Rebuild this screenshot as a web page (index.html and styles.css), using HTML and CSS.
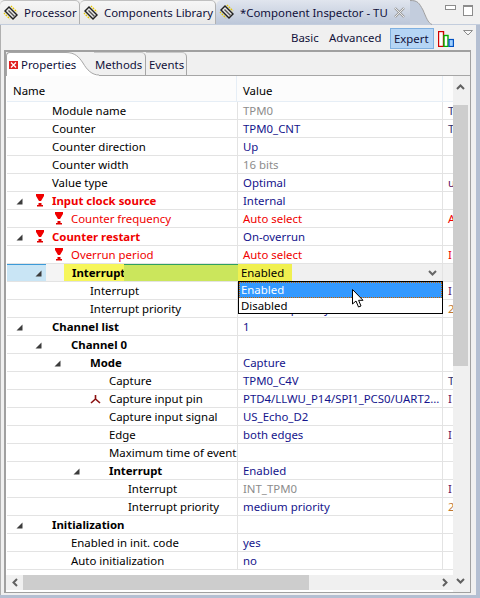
FILE: index.html
```html
<!DOCTYPE html>
<html lang="en">
<head>
  <meta charset="UTF-8" />
  <title>Component Inspector</title>
  <link rel="stylesheet" href="styles.css">
</head>
<body>

  <svg class="defs" width="0" height="0">
    <symbol id="chip" viewBox="0 0 16 16">
      <path d="M1 6 L6 1 L15 10 L10 15 Z" fill="#222"/>
      <path d="M3 6 L6 3 L13 10 L10 13 Z" fill="#e8e8e8"/>
      <path d="M5 6 L6 5 L12 11 L11 12 Z" fill="#555"/>
      <path d="M1 8 L3 10 M3 10 L5 12 M5 12 L7 14 M8 1 L10 3 M10 3 L12 5 M12 5 L14 7" stroke="#e8c800" stroke-width="1.4" stroke-dasharray="1.4 1"/>
    </symbol>
    <symbol id="twist" viewBox="0 0 7 7">
      <path d="M6.5 .5 V6.5 H.5 Z" fill="#3c3c3c"/>
    </symbol>
    <symbol id="warn" viewBox="0 0 10 13">
      <path d="M1 0 H9 V2 L6 7 H4 L1 2 Z" fill="#f00000"/>
      <path d="M3.5 9 H6.5 V11 H8 V12.5 H2 V11 H3.5 Z" fill="#e00000"/>
    </symbol>
  </svg>

  <div class="window">
    <div class="top-tabs">
      <div class="top-tab tab-processor"><svg class="chip"><use href="#chip"/></svg>Processor</div>
      <div class="top-tab tab-library"><svg class="chip"><use href="#chip"/></svg>Components Library</div>
      <div class="top-tab active"><svg class="chip"><use href="#chip"/></svg>*Component Inspector - TU
        <svg class="close" width="11" height="11" viewBox="0 0 11 11"><path d="M1 1 L10 10 M10 1 L1 10" stroke="#9a9a9a" stroke-width="2.4"/><path d="M1 1 L10 10 M10 1 L1 10" stroke="#f4f4f4" stroke-width=".9"/></svg>
      </div>
      <svg class="tab-curve" width="22" height="25" viewBox="0 0 22 25"><path d="M0 0 C8 0 9 3 13 10 C16 17 18 23 22 25 H0 Z" fill="#c3cddd"/><path d="M0 .5 C8 .5 9 3 13 10 C16 17 18 23 22 24.5" fill="none" stroke="#a0a0a0"/></svg>
      <div class="window-btns">
        <span class="min-btn"></span>
        <span class="max-btn"></span>
      </div>
    </div>

    <div class="frame">
      <div class="toolbar">
        <span class="tool tool-basic">Basic</span>
        <span class="tool tool-advanced">Advanced</span>
        <span class="tool tool-expert">Expert</span>
        <svg class="chart" width="16" height="16" viewBox="0 0 16 16">
          <rect x=".5" y=".5" width="5" height="15" fill="#fff" stroke="#d00000" stroke-width="1.4"/>
          <rect x="6" y="4.5" width="4" height="11" fill="#fff" stroke="#00b000" stroke-width="1.4"/>
          <rect x="11" y="8.5" width="4.4" height="7" fill="#9fd0ff" stroke="#0050c0" stroke-width="1.2"/>
        </svg>
        <svg class="view-menu" width="10" height="6" viewBox="0 0 10 6"><path d="M.5 .5 H9.5 L5 5 Z" fill="#f8f8f8" stroke="#8c8c8c"/></svg>
      </div>

      <div class="inner">
        <div class="inner-tabs">
          <div class="inner-tab inner-active">
            <svg class="prop-icon" width="9" height="8" viewBox="0 0 9 8"><rect width="9" height="8" fill="#e02020"/><path d="M2 1.5 L7 6.5 M7 1.5 L2 6.5" stroke="#fff" stroke-width="1.3"/></svg>
            Properties
          </div>
          <svg class="inner-curve" width="33" height="24" viewBox="0 0 33 24"><path d="M0 0 C9 0 13 5 17 11 C21 18 26 23 33 23 V24 H0 Z" fill="#fff"/><path d="M0 .5 C9 .5 13 5 17 11 C21 18 26 23 33 23" fill="none" stroke="#a6a6a6"/></svg>
          <div class="inner-tab tab-methods">Methods</div>
          <div class="inner-tab tab-events">Events</div>
        </div>

        <div class="table-area">
          <div class="table">
            <div class="head">
              <div class="head-name">Name</div>
              <div class="head-value">Value</div>
              <div class="head-extra"></div>
            </div>

            <div class="rows">
              <div class="row"><div class="name"><i class="lvl0"></i><i class="twist"></i><i class="mark"></i>Module name</div><div class="value ro">TPM0</div><div class="extra">T</div></div>
              <div class="row"><div class="name"><i class="lvl0"></i><i class="twist"></i><i class="mark"></i>Counter</div><div class="value">TPM0_CNT</div><div class="extra">T</div></div>
              <div class="row"><div class="name"><i class="lvl0"></i><i class="twist"></i><i class="mark"></i>Counter direction</div><div class="value">Up</div><div class="extra"></div></div>
              <div class="row"><div class="name"><i class="lvl0"></i><i class="twist"></i><i class="mark"></i>Counter width</div><div class="value ro">16 bits</div><div class="extra"></div></div>
              <div class="row"><div class="name"><i class="lvl0"></i><i class="twist"></i><i class="mark"></i>Value type</div><div class="value">Optimal</div><div class="extra purple">u</div></div>
              <div class="row"><div class="name bad"><i class="lvl0"></i><i class="twist"><svg><use href="#twist"/></svg></i><i class="mark"><svg class="warn"><use href="#warn"/></svg></i><b>Input clock source</b></div><div class="value">Internal</div><div class="extra"></div></div>
              <div class="row"><div class="name bad"><i class="lvl1"></i><i class="twist"></i><i class="mark"><svg class="warn"><use href="#warn"/></svg></i>Counter frequency</div><div class="value bad">Auto select</div><div class="extra bad">A</div></div>
              <div class="row"><div class="name bad"><i class="lvl0"></i><i class="twist"><svg><use href="#twist"/></svg></i><i class="mark"><svg class="warn"><use href="#warn"/></svg></i><b>Counter restart</b></div><div class="value">On-overrun</div><div class="extra"></div></div>
              <div class="row"><div class="name bad"><i class="lvl1"></i><i class="twist"></i><i class="mark"><svg class="warn"><use href="#warn"/></svg></i>Overrun period</div><div class="value bad">Auto select</div><div class="extra bad">I</div></div>

              <div class="row selected">
                <div class="name">
                  <div class="sel-blue"><svg><use href="#twist"/></svg></div>
                  <div class="sel-gap"></div>
                  <div class="sel-yellow"><b>Interrupt</b></div>
                  <div class="sel-green"></div>
                </div>
                <div class="value sel-value">
                  <span class="sel-text">Enabled</span>
                  <svg class="combo-arrow" width="9" height="6" viewBox="0 0 9 6"><path d="M1 1 L4.5 4.5 L8 1" fill="none" stroke="#666" stroke-width="2"/></svg>
                </div>
                <div class="extra"></div>
              </div>

              <div class="row"><div class="name"><i class="lvl2"></i><i class="twist"></i><i class="mark"></i>Interrupt</div><div class="value"></div><div class="extra purple">I</div></div>
              <div class="row"><div class="name"><i class="lvl2"></i><i class="twist"></i><i class="mark"></i>Interrupt priority</div><div class="value">medium priority</div><div class="extra orange">2</div></div>
              <div class="row"><div class="name"><i class="lvl0"></i><i class="twist"><svg><use href="#twist"/></svg></i><i class="mark"></i><b>Channel list</b></div><div class="value">1</div><div class="extra"></div></div>
              <div class="row"><div class="name"><i class="lvl1"></i><i class="twist"><svg><use href="#twist"/></svg></i><i class="mark"></i><b>Channel 0</b></div><div class="value"></div><div class="extra"></div></div>
              <div class="row"><div class="name"><i class="lvl2"></i><i class="twist"><svg><use href="#twist"/></svg></i><i class="mark"></i><b>Mode</b></div><div class="value">Capture</div><div class="extra"></div></div>
              <div class="row"><div class="name"><i class="lvl3"></i><i class="twist"></i><i class="mark"></i>Capture</div><div class="value">TPM0_C4V</div><div class="extra">T</div></div>
              <div class="row"><div class="name"><i class="lvl3"></i><i class="twist"></i><i class="mark"><svg class="pin" width="11" height="10" viewBox="0 0 11 10"><path d="M5.5 1 V5 L1 9 M5.5 5 L10 9" fill="none" stroke="#8a1010" stroke-width="1.6"/></svg></i>Capture input pin</div><div class="value">PTD4/LLWU_P14/SPI1_PCS0/UART2...</div><div class="extra purple">I</div></div>
              <div class="row"><div class="name"><i class="lvl3"></i><i class="twist"></i><i class="mark"></i>Capture input signal</div><div class="value">US_Echo_D2</div><div class="extra"></div></div>
              <div class="row"><div class="name"><i class="lvl3"></i><i class="twist"></i><i class="mark"></i>Edge</div><div class="value">both edges</div><div class="extra purple">I</div></div>
              <div class="row"><div class="name"><i class="lvl3"></i><i class="twist"></i><i class="mark"></i>Maximum time of event</div><div class="value"></div><div class="extra"></div></div>
              <div class="row"><div class="name"><i class="lvl3"></i><i class="twist"><svg><use href="#twist"/></svg></i><i class="mark"></i><b>Interrupt</b></div><div class="value">Enabled</div><div class="extra"></div></div>
              <div class="row"><div class="name"><i class="lvl4"></i><i class="twist"></i><i class="mark"></i>Interrupt</div><div class="value ro">INT_TPM0</div><div class="extra purple">I</div></div>
              <div class="row"><div class="name"><i class="lvl4"></i><i class="twist"></i><i class="mark"></i>Interrupt priority</div><div class="value">medium priority</div><div class="extra orange">2</div></div>
              <div class="row"><div class="name"><i class="lvl0"></i><i class="twist"><svg><use href="#twist"/></svg></i><i class="mark"></i><b>Initialization</b></div><div class="value"></div><div class="extra"></div></div>
              <div class="row"><div class="name"><i class="lvl1"></i><i class="twist"></i><i class="mark"></i>Enabled in init. code</div><div class="value">yes</div><div class="extra"></div></div>
              <div class="row"><div class="name"><i class="lvl1"></i><i class="twist"></i><i class="mark"></i>Auto initialization</div><div class="value">no</div><div class="extra"></div></div>

              <!-- Open combo list -->
              <div class="combo-list">
                <div class="option current">Enabled</div>
                <div class="option">Disabled</div>
              </div>
              <svg class="cursor" width="13" height="19" viewBox="0 0 13 19"><path d="M.5 .5 V15 L4 12 L6.5 18 L9 17 L6.6 11.3 H11 Z" fill="#fff" stroke="#000"/></svg>
            </div>

            <div class="hscroll">
              <div class="h-arrow"><svg width="6" height="9" viewBox="0 0 6 9"><path d="M5 1 L1.5 4.5 L5 8" fill="none" stroke="#606060" stroke-width="2"/></svg></div>
              <div class="h-thumb"></div>
              <div class="h-space"></div>
              <div class="h-arrow"><svg width="6" height="9" viewBox="0 0 6 9"><path d="M1 1 L4.5 4.5 L1 8" fill="none" stroke="#606060" stroke-width="2"/></svg></div>
            </div>
          </div>

          <div class="vscroll">
            <div class="v-arrow"><svg width="9" height="6" viewBox="0 0 9 6"><path d="M1 5 L4.5 1.5 L8 5" fill="none" stroke="#606060" stroke-width="2"/></svg></div>
            <div class="v-thumb"></div>
            <div class="v-space"></div>
            <div class="v-arrow"><svg width="9" height="6" viewBox="0 0 9 6"><path d="M1 1 L4.5 4.5 L8 1" fill="none" stroke="#606060" stroke-width="2"/></svg></div>
          </div>
        </div>
      </div>
    </div>
  </div>

</body>
</html>
```

FILE: styles.css
```css
body {
  margin: 0;
  font-family: "Noto Sans", "Open Sans", sans-serif;
  font-size: 11.4px;
  color: #000;
  overflow: hidden;
}

.defs {
  position: absolute;
}

.window {
  width: 480px;
  height: 598px;
  box-sizing: border-box;
  padding-right: 4px;
  padding-bottom: 3px;
  background-color: #b4bfd2;
  display: flex;
  flex-direction: column;
}

/* Editor tabs */
.top-tabs {
  height: 25px;
  margin-right: -4px;
  flex: none;
  display: flex;
  background-color: #f0f0f0;
  border-bottom: 1px solid #c3cddd;
  box-sizing: border-box;
}

.top-tab {
  display: flex;
  align-items: center;
  height: 24px;
  box-sizing: border-box;
  padding-left: 3px;
  background: linear-gradient(#f6f6f6, #e8e8e8);
  border-top: 1px solid #c0c0c0;
  border-right: 1px solid #b0b0b0;
  border-radius: 5px 5px 0 0;
  white-space: nowrap;
  color: #10103a;
}

.chip {
  width: 16px;
  height: 16px;
  margin-right: 5px;
  flex: none;
}

.tab-processor {
  width: 80px;
}

.tab-library {
  width: 136px;
}

.top-tab.active {
  width: 194px;
  padding-right: 5px;
  border: none;
  border-radius: 6px 0 0 0;
  background: linear-gradient(#e0e5ee, #bcc7d9);
}

.close {
  margin-left: auto;
  flex: none;
}

.tab-curve {
  flex: none;
}

.window-btns {
  flex: 1;
  display: flex;
  align-items: flex-start;
  padding: 5px 0 0 13px;
  gap: 7px;
}

.min-btn {
  width: 9px;
  height: 3px;
  border: 1px solid #8c8c8c;
  background-color: #fff;
}

.max-btn {
  width: 8px;
  height: 8px;
  border: 1px solid #8c8c8c;
  border-top-width: 2px;
  background-color: #fff;
}

/* View frame */
.frame {
  flex: 1;
  min-height: 0;
  display: flex;
  flex-direction: column;
  background-color: #f0f0f0;
  border-left: 1px solid #b0b0b0;
}

.toolbar {
  height: 25px;
  flex: none;
  display: flex;
  align-items: center;
  color: #10103a;
  white-space: nowrap;
  padding-left: 290px;
}

.tool-basic {
  width: 38px;
}

.tool-advanced {
  width: 61px;
}

.tool-expert {
  box-sizing: border-box;
  width: 44px;
  height: 21px;
  margin-top: 2px;
  padding: 2px 0 0 3px;
  background-color: #b5d5f5;
  border: 1px solid #7fb0e0;
}

.chart {
  margin-left: 4px;
  margin-top: 2px;
  flex: none;
}

.view-menu {
  align-self: flex-start;
  margin-left: 9px;
  margin-top: 5px;
  flex: none;
}

.inner {
  flex: 1;
  min-height: 0;
  display: flex;
  flex-direction: column;
  margin: 0 5px 2px 3px;
  border: 1px solid #a0a0a0;
  border-top: 2px solid #a0a0a0;
  border-left-width: 2px;
  background-color: #f0f0f0;
}

.inner-tabs {
  height: 24px;
  flex: none;
  display: flex;
  border-bottom: 1px solid #a6a6a6;
  box-sizing: border-box;
}

.inner-tab {
  display: flex;
  align-items: center;
  height: 24px;
  box-sizing: border-box;
  color: #10103a;
  white-space: nowrap;
}

.inner-active {
  width: 60px;
  padding-left: 2px;
  background-color: #fff;
  border-top: 1px solid #a6a6a6;
  border-left: 1px solid #a6a6a6;
  border-radius: 4px 0 0 0;
  flex: none;
  position: relative;
  z-index: 1;
}

.prop-icon {
  margin-right: 3px;
  flex: none;
}

.inner-curve {
  flex: none;
  margin-right: -5px;
}

.tab-methods {
  width: 52px;
  height: 23px;
  padding-left: 1px;
  border-right: 1px solid #a6a6a6;
  border-radius: 0 5px 0 0;
  border-top: 1px solid #c8c8c8;
  position: relative;
}

.tab-events {
  width: 41px;
  height: 23px;
  padding-left: 3px;
  border-right: 1px solid #a6a6a6;
  border-radius: 0 5px 0 0;
  border-top: 1px solid #c8c8c8;
}

.table-area {
  flex: 1;
  min-height: 0;
  display: flex;
}

.table {
  width: 447px;
  flex: none;
  display: flex;
  flex-direction: column;
  background-color: #fff;
}

.head {
  height: 26px;
  flex: none;
  display: flex;
  box-sizing: border-box;
  margin-left: 1px;
  background-color: #fcfcfc;
  border-bottom: 1px solid #e6eef6;
  line-height: 29px;
}

.head-name {
  width: 230px;
  box-sizing: border-box;
  padding-left: 6px;
  border-right: 1px solid #e6eef6;
}

.head-value {
  width: 206px;
  box-sizing: border-box;
  padding-left: 6px;
  border-right: 1px solid #e6eef6;
}

.head-extra {
  flex: 1;
}

.rows {
  position: relative;
  height: 473px;
  flex: none;
  margin-left: 1px;
  overflow: hidden;
}

.row {
  height: 18px;
  box-sizing: border-box;
  display: flex;
  border-bottom: 1px solid #e3e3e3;
  line-height: 18px;
}

.name {
  width: 231px;
  flex: none;
  box-sizing: border-box;
  display: flex;
  white-space: nowrap;
  overflow: hidden;
  border-right: 1px solid #e3e3e3;
}

.name i {
  display: block;
  flex: none;
  font-style: normal;
}

.lvl0 { width: 7px; }
.lvl1 { width: 26px; }
.lvl2 { width: 45px; }
.lvl3 { width: 64px; }
.lvl4 { width: 83px; }

.twist {
  width: 19px;
  padding: 6px 0 0 2px;
  box-sizing: border-box;
}

.twist svg {
  display: block;
  width: 7px;
  height: 7px;
}

.mark {
  width: 19px;
  padding-left: 2px;
  box-sizing: border-box;
}

.warn {
  display: block;
  width: 10px;
  height: 13px;
  margin-top: 2px;
}

.pin {
  display: block;
  margin-top: 4px;
  margin-left: -2px;
}

.value {
  width: 205px;
  flex: none;
  box-sizing: border-box;
  padding-left: 5px;
  border-right: 1px solid #e3e3e3;
  color: #14148c;
  white-space: nowrap;
  overflow: hidden;
}

.value.ro {
  color: #8c8c8c;
}

.extra {
  flex: 1;
  overflow: hidden;
  padding-left: 5px;
  color: #30306a;
}

.extra.purple {
  color: #601060;
}

.extra.orange {
  color: #c07830;
}

.name.bad,
.value.bad,
.extra.bad {
  color: #f00000;
}

/* Row being edited */
.selected {
  background-color: #f0f0f0;
}

.sel-blue {
  width: 39px;
  flex: none;
  box-sizing: border-box;
  padding: 5px 0 0 28px;
  background-color: #c9e5f5;
  border-top: 1px solid #3c9ad8;
}

.sel-blue svg {
  display: block;
  width: 7px;
  height: 7px;
}

.sel-gap {
  width: 18px;
  flex: none;
  background-color: #f4f4f4;
}

.sel-yellow {
  width: 60px;
  flex: none;
  box-sizing: border-box;
  padding-left: 8px;
  background-color: #f6f65a;
}

.sel-green {
  flex: 1;
  background-color: #cbe65c;
  border-top: 1px solid #30a060;
}

.selected .name {
  border-right: none;
}

.sel-value {
  display: flex;
  align-items: center;
  justify-content: space-between;
  padding-left: 0;
  padding-right: 5px;
  background-color: #f0f0f0;
  color: #000;
}

.sel-text {
  width: 54px;
  box-sizing: border-box;
  padding-left: 3px;
  background-color: #f0f050;
}

.combo-list {
  position: absolute;
  left: 231px;
  top: 179px;
  width: 205px;
  box-sizing: border-box;
  border: 1px solid #000;
  background-color: #fff;
}

.option {
  height: 15px;
  line-height: 15px;
  padding-left: 2px;
}

.option.current {
  height: 16px;
  background-color: #3399ff;
  color: #fff;
  outline: 1px dotted #c06000;
  outline-offset: -1px;
}

.cursor {
  position: absolute;
  left: 345px;
  top: 187px;
}

/* Scrollbars */
.hscroll {
  height: 15px;
  flex: none;
  display: flex;
  background-color: #f0f0f0;
}

.h-arrow {
  width: 17px;
  flex: none;
  display: flex;
  align-items: center;
  justify-content: center;
}

.h-thumb {
  width: 286px;
  background-color: #cdcdcd;
}

.h-space {
  flex: 1;
}

.vscroll {
  width: 15px;
  flex: none;
  display: flex;
  flex-direction: column;
  background-color: #f0f0f0;
}

.v-arrow {
  height: 22px;
  flex: none;
  display: flex;
  align-items: center;
  justify-content: center;
}

.v-thumb {
  height: 261px;
  margin-top: 7px;
  background-color: #cdcdcd;
}

.v-space {
  flex: 1;
}
```
